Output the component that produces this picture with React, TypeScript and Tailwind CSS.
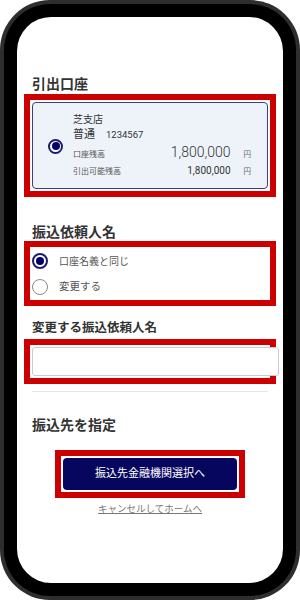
import React from "react";

const Radio = ({ checked, size = 15 }: { checked?: boolean; size?: number }) => (
  <span
    className={
      checked
        ? "flex shrink-0 items-center justify-center rounded-full border-[2px] border-[#1c1c6b] bg-white"
        : "flex shrink-0 items-center justify-center rounded-full border-[1.5px] border-[#8a8a8a] bg-white"
    }
    style={{ width: size, height: size }}
  >
    {checked && <span className="h-[8px] w-[8px] rounded-full bg-[#000066]" />}
  </span>
);

const Heading = ({ children, small }: { children: React.ReactNode; small?: boolean }) => (
  <h2
    className={
      small
        ? "text-[12.5px] font-bold leading-[16px] text-[#333]"
        : "text-[14px] font-bold leading-[16px] text-[#333]"
    }
  >
    {children}
  </h2>
);

// red annotation frame, square cornered, drawn as an outline so it doesn't shift layout
const mark = "outline-solid outline-[6px] outline-offset-2 outline-[#cc0000]";

export default function App() {
  return (
    <div
      className="h-[600px] w-[300px] bg-white"
      style={{ fontFamily: "Roboto, 'Noto Sans CJK JP', sans-serif" }}
    >
      <div className="h-full rounded-[50px] bg-[#2e2e2e] p-[4px]">
        <div className="h-full rounded-[46px] bg-black p-[13px]">
          <div className="h-full overflow-hidden rounded-[34px] bg-white px-[15px] pt-[59px]">
            <Heading>引出口座</Heading>

            {/* 引出口座 card */}
            <div className={`mt-[10px] ${mark}`}>
              <div className="flex items-center rounded-[4px] border border-[#3c3f7e] bg-[#eef3fa] pb-[9px] pl-[15px] pr-[16px] pt-[10px]">
                <Radio checked />
                <div className="ml-[10px] flex-1 text-[#333]">
                  <div className="text-[10px] leading-[14px]">芝支店</div>
                  <div className="flex items-baseline leading-[16px]">
                    <span className="text-[11px]">普通</span>
                    <span className="ml-[11px] text-[9.5px]">1234567</span>
                  </div>
                  <div className="flex items-baseline justify-between leading-[19px]">
                    <span className="text-[8px] text-[#555]">口座残高</span>
                    <span className="flex items-baseline">
                      <span className="text-[14px] font-light">1,800,000</span>
                      <span className="ml-[13px] text-[7.5px] text-[#666]">円</span>
                    </span>
                  </div>
                  <div className="flex items-baseline justify-between leading-[14px]">
                    <span className="text-[8px] text-[#555]">引出可能残高</span>
                    <span className="flex items-baseline">
                      <span className="text-[10px]">1,800,000</span>
                      <span className="ml-[13px] text-[7.5px] text-[#666]">円</span>
                    </span>
                  </div>
                </div>
              </div>
            </div>

            <div className="mt-[35px]">
              <Heading>振込依頼人名</Heading>
            </div>
            <div className={`mt-[9px] flex flex-col gap-[4px] pt-[1px] ${mark}`}>
              <label className="flex h-[22px] items-center">
                <Radio checked size={16} />
                <span className="ml-[11px] text-[10px] text-[#555]">口座名義と同じ</span>
              </label>
              <label className="flex h-[22px] items-center">
                <Radio size={16} />
                <span className="ml-[11px] text-[10.5px] text-[#555]">変更する</span>
              </label>
            </div>

            <div className="mt-[22px]">
              <Heading small>変更する振込依頼人名</Heading>
            </div>
            <div className={`mt-[11px] ${mark}`}>
              <input
                type="text"
                className="relative block h-[29px] w-[calc(100%+11px)] rounded-[3px] border border-[#cccccc] bg-white px-2 text-[11px] outline-none"
              />
            </div>
            <div className="mt-[15px] h-px bg-[#e6e6e6]" />

            <div className="mt-[25px]">
              <Heading>振込先を指定</Heading>
            </div>
            <div className="mt-[25px] flex justify-center">
              <div className={mark}>
                <button className="block h-[32px] w-[174px] rounded-[4px] bg-[#06065e] text-[11px] text-white">
                  振込先金融機関選択へ
                </button>
              </div>
            </div>
            <div className="mt-[13px] text-center text-[9.5px] leading-[12px]">
              <a className="text-[#777] underline">キャンセルしてホームへ</a>
            </div>
          </div>
        </div>
      </div>
    </div>
  );
}
